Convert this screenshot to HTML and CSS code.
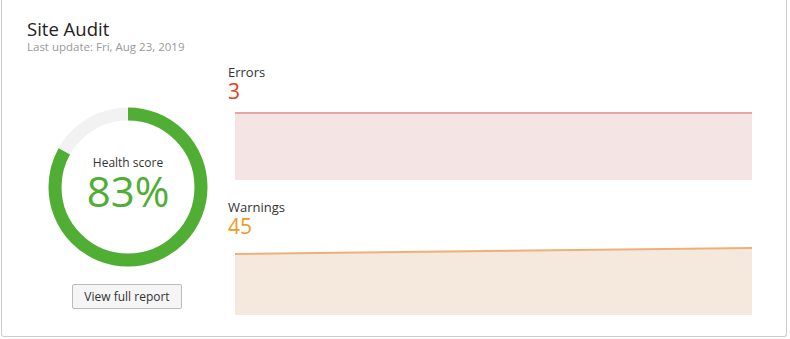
FILE: index.html
```html
<!DOCTYPE html>
<html>
<head>
<meta charset="utf-8">
<link rel="stylesheet" href="styles.css">
</head>
<body>
<div class="card">
  <div class="header">
    <div class="title">Site Audit</div>
    <div class="subtitle">Last update: Fri, Aug 23, 2019</div>
  </div>
  <div class="content">
    <div class="score-col">
      <div class="donut">
        <svg width="160" height="160" viewBox="0 0 160 160">
          <circle cx="80" cy="80" r="73" fill="none" stroke="#f2f2f2" stroke-width="13"/>
          <circle cx="80" cy="80" r="73" fill="none" stroke="#4fae33" stroke-width="13"
            stroke-dasharray="380.7 458.7" transform="rotate(-90 80 80)"/>
        </svg>
        <div class="donut-text">
          <div class="score-label">Health score</div>
          <div class="score-value">83%</div>
        </div>
      </div>
      <button class="report-btn">View full report</button>
    </div>
    <div class="charts">
      <div class="metric">
        <div class="metric-label">Errors</div>
        <div class="metric-value errors">3</div>
        <svg class="chart" width="517" height="68" viewBox="0 0 517 68">
          <rect x="0" y="1" width="517" height="67" fill="#f5e4e4"/>
          <line x1="0" y1="1" x2="517" y2="1" stroke="#eba3a3" stroke-width="2"/>
        </svg>
      </div>
      <div class="metric">
        <div class="metric-label">Warnings</div>
        <div class="metric-value warnings">45</div>
        <svg class="chart" width="517" height="68" viewBox="0 0 517 68">
          <polygon points="0,7 517,1 517,68 0,68" fill="#f5e8dc"/>
          <line x1="0" y1="7" x2="517" y2="1" stroke="#efb078" stroke-width="2"/>
        </svg>
      </div>
    </div>
  </div>
</div>
</body>
</html>
```

FILE: styles.css
```css
html, body {
  margin: 0;
  padding: 0;
  background: #ffffff;
}
body {
  font-family: "Open Sans", "Noto Sans", sans-serif;
  color: #333333;
}
.card {
  margin-left: 1px;
  width: 784px;
  height: 336px;
  border: 1px solid #cccccc;
  border-top: none;
  border-radius: 0 0 3px 3px;
  box-sizing: content-box;
}
.header {
  padding: 18px 0 0 25px;
}
.title {
  font-size: 18.5px;
  line-height: 22px;
  color: #222222;
}
.subtitle {
  font-size: 11.5px;
  line-height: 14px;
  color: #999999;
}
.content {
  display: flex;
}
.score-col {
  width: 200px;
  padding-left: 46px;
  padding-top: 53px;
  display: flex;
  flex-direction: column;
  align-items: flex-start;
}
.donut {
  position: relative;
  width: 160px;
  height: 160px;
}
.donut svg {
  display: block;
}
.donut-text {
  position: absolute;
  inset: 0;
  display: flex;
  flex-direction: column;
  align-items: center;
  justify-content: center;
}
.score-label {
  font-size: 12px;
  line-height: 16px;
  color: #333333;
  margin-top: -6px;
  margin-bottom: -2px;
}
.score-value {
  font-size: 42px;
  line-height: 44px;
  color: #4fae33;
}
.report-btn {
  margin-top: 17px;
  margin-left: 24px;
  width: 110px;
  height: 25px;
  border: 1px solid #bbbbbb;
  border-radius: 2px;
  background: #f5f5f5;
  font-family: "Open Sans", "Noto Sans", sans-serif;
  font-size: 12px;
  color: #333333;
  padding: 0;
}
.charts {
  padding-top: 10px;
  margin-left: -20px;
  display: flex;
  flex-direction: column;
  gap: 19px;
}
.metric-label {
  font-size: 13px;
  line-height: 16px;
  color: #333333;
}
.metric-value {
  font-size: 21px;
  line-height: 22px;
}
.metric-value.errors {
  color: #e4401e;
}
.metric-value.warnings {
  color: #f09a25;
}
.chart {
  display: block;
  margin-left: 7px;
  margin-top: 10px;
}
```
